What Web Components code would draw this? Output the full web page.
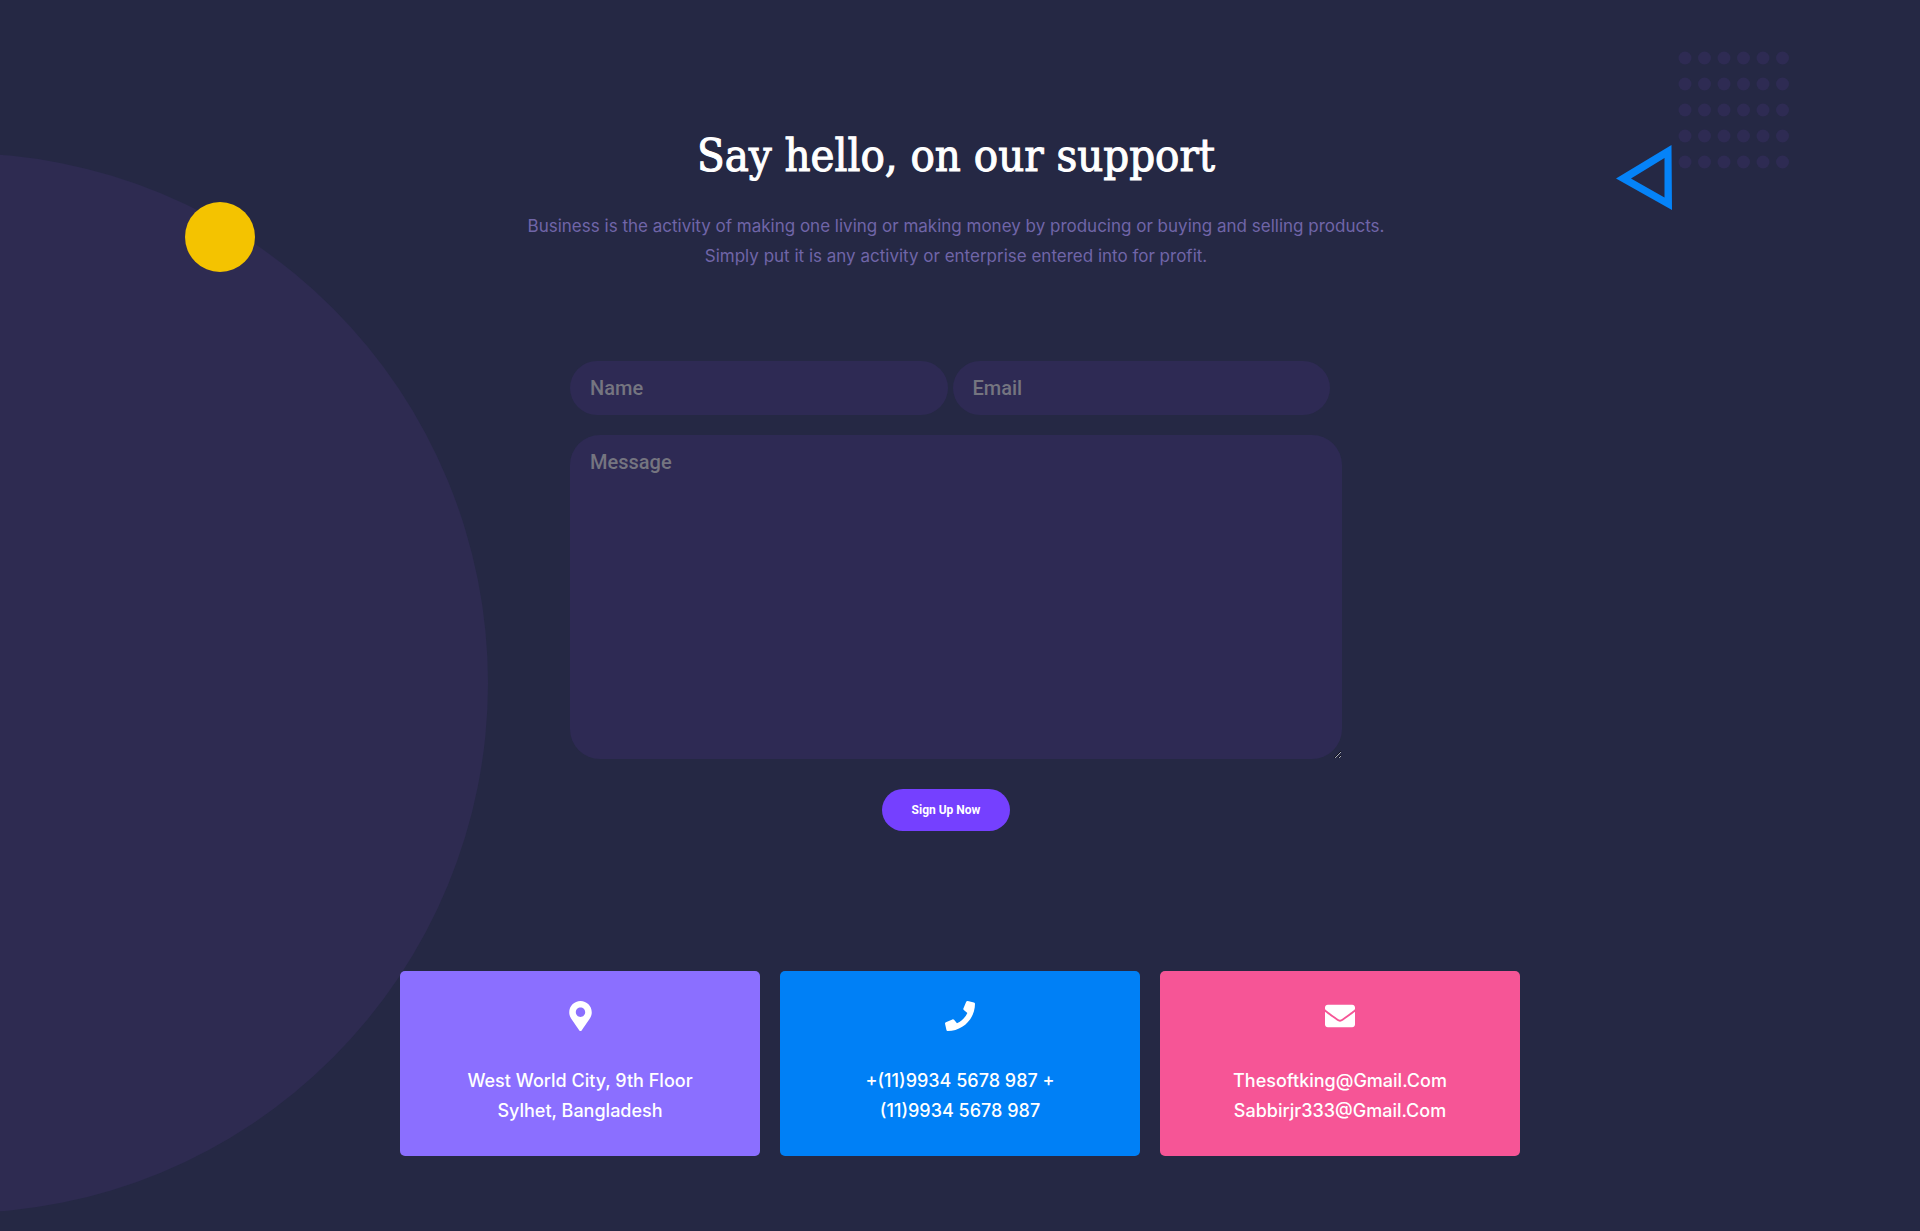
<!DOCTYPE html>
<html lang="en">
<head>
<meta charset="utf-8">
<meta name="viewport" content="width=device-width, initial-scale=1">
<title>Support</title>
<style>
  html, body { margin: 0; min-height: 100%; background: #252844; }
  body { font-family: Inter, "Open Sans", sans-serif; color: #fff; }
</style>
</head>
<body>
<support-page>
  <backdrop-shapes slot="backdrop"></backdrop-shapes>
  <section-heading>
    <span slot="title">Say hello, on our support</span>
    Business is the activity of making one living or making money by producing or buying and selling products.<br>
    Simply put it is any activity or enterprise entered into for profit.
  </section-heading>
  <contact-form></contact-form>
  <contact-card slot="card" icon="pin" style="--card: #8b6fff">West World City, 9th Floor<br>Sylhet, Bangladesh</contact-card>
  <contact-card slot="card" icon="phone" style="--card: #0080f6">+(11)9934 5678 987 +<br>(11)9934 5678 987</contact-card>
  <contact-card slot="card" icon="mail" style="--card: #f65596">Thesoftking@Gmail.Com<br>Sabbirjr333@Gmail.Com</contact-card>
</support-page>

<script>
class ShadowElement extends HTMLElement {
  constructor() {
    super();
    this.attachShadow({ mode: "open" });
  }
  connectedCallback() {
    this.shadowRoot.innerHTML = this.render();
  }
}

class SupportPage extends ShadowElement {
  render() {
    return `
      <style>
        :host { display: block; position: relative; overflow: hidden; min-height: 100vh; box-sizing: border-box; padding: 120px 0 75px; }
        main { position: relative; display: flex; flex-direction: column; gap: 140px; max-width: 1120px; margin: 0 auto; }
        .intro { display: flex; flex-direction: column; gap: 90px; padding-right: 8px; }
        .cards { display: grid; grid-template-columns: repeat(3, 1fr); gap: 20px; }
      </style>
      <slot name="backdrop"></slot>
      <main>
        <div class="intro"><slot></slot></div>
        <div class="cards"><slot name="card"></slot></div>
      </main>`;
  }
}

class BackdropShapes extends ShadowElement {
  render() {
    let dots = "";
    for (let row = 0; row < 5; row++)
      for (let col = 0; col < 6; col++)
        dots += `<circle cx="${7 + col * 19.5}" cy="${7 + row * 26}" r="6.5"/>`;
    return `
      <style>
        :host { position: absolute; inset: 0; pointer-events: none; }
        .disc, .sun, svg { position: absolute; }
        .disc { left: -572px; top: 153px; width: 1060px; height: 1060px; border-radius: 50%; background: #2e2b51; }
        .sun { left: 185px; top: 202px; width: 70px; height: 70px; border-radius: 50%; background: #f4c300; }
        .dots { right: 130px; top: 51px; fill: #2e2b53; }
        .triangle { right: 247px; top: 145px; fill: #0583f8; }
      </style>
      <div class="disc"></div>
      <div class="sun"></div>
      <svg class="dots" width="112" height="118" aria-hidden="true">${dots}</svg>
      <svg class="triangle" width="57" height="66" aria-hidden="true">
        <path fill-rule="evenodd" d="M0 33.5 55.5 0 56 65ZM15 33.5 48.5 52.500V13Z"/>
      </svg>`;
  }
}

class SectionHeading extends ShadowElement {
  render() {
    return `
      <style>
        :host { display: block; text-align: center; }
        h1 { margin: 0 0 19px; font: 400 45px/72px "DejaVu Serif Condensed", "DejaVu Serif", serif; color: #fff; -webkit-text-stroke: 1px #fff; }
        p { margin: 0; font-size: 17px; line-height: 30px; color: #7065a8; }
      </style>
      <h1><slot name="title"></slot></h1>
      <p><slot></slot></p>`;
  }
}

class ContactForm extends ShadowElement {
  render() {
    return `
      <style>
        :host { display: block; width: 100%; max-width: 772px; margin: 0 auto; }
        form { display: flex; flex-direction: column; }
        .row { display: flex; gap: 5px; padding-right: 12px; margin-bottom: 20px; }
        input, textarea { box-sizing: border-box; min-width: 0; border: 0; outline: 0; background: #2e2a54; color: #fff; font: 500 20px/24px Roboto, sans-serif; border-radius: 30px; }
        input { flex: 1; height: 54px; padding: 0 20px; }
        textarea { display: block; width: 100%; height: 324px; padding: 15px 20px; resize: both; }
        ::placeholder { color: #757580; opacity: 1; }
        button { align-self: center; margin: 30px 20px 0 0; padding: 0 30px; height: 42px; border: 0; border-radius: 21px; background: #7540ff; color: #fff; font: 700 12px/18px Roboto, sans-serif; cursor: pointer; }
      </style>
      <form>
        <div class="row">
          <input type="text" name="name" placeholder="Name" aria-label="Name">
          <input type="email" name="email" placeholder="Email" aria-label="Email">
        </div>
        <textarea name="message" placeholder="Message" aria-label="Message"></textarea>
        <button type="button">Sign Up Now</button>
      </form>`;
  }
}

const ICONS = {
  pin: { box: "0 0 384 512", w: 23, d: "M172.268 501.670C26.970 291.031 0 269.413 0 192 0 85.961 85.961 0 192 0s192 85.961 192 192c0 77.413-26.970 99.031-172.268 309.670-9.535 13.774-29.930 13.773-39.464 0zM192 272c44.183 0 80-35.817 80-80s-35.817-80-80-80-80 35.817-80 80 35.817 80 80 80z" },
  phone: { box: "0 0 512 512", w: 30, d: "M493.400 24.600l-104-24c-11.300-2.600-22.900 3.300-27.500 13.900l-48 112c-4.200 9.800-1.400 21.300 6.900 28l60.600 49.600c-36 76.700-98.900 140.500-177.200 177.200l-49.600-60.600c-6.800-8.300-18.200-11.100-28-6.900l-112 48C3.900 366.500-2 378.100.6 389.400l24 104C27.100 504.200 36.700 512 48 512c256.100 0 464-207.500 464-464 0-11.200-7.700-20.900-18.600-23.400z" },
  mail: { box: "0 0 512 512", w: 30, d: "M502.300 190.800c3.900-3.100 9.700-.2 9.700 4.700V400c0 26.500-21.500 48-48 48H48c-26.500 0-48-21.500-48-48V195.600c0-5 5.700-7.800 9.700-4.700 22.400 17.400 52.100 39.500 154.100 113.600 21.100 15.400 56.700 47.800 92.200 47.600 35.700.3 72-32.800 92.300-47.600 102-74.100 131.600-96.300 154-113.700zM256 320c23.200.4 56.600-29.200 73.400-41.400 132.700-96.300 142.800-104.700 173.400-128.700 5.800-4.500 9.200-11.500 9.200-18.900v-19c0-26.500-21.500-48-48-48H48c-26.500 0-48 21.500-48 48v19c0 7.400 3.400 14.300 9.200 18.900 30.600 23.900 40.700 32.400 173.400 128.700 16.800 12.200 50.200 41.800 73.400 41.400z" }
};

class ContactCard extends ShadowElement {
  render() {
    const icon = ICONS[this.getAttribute("icon")];
    return `
      <style>
        :host { display: flex; flex-direction: column; align-items: center; gap: 35px; padding: 30px 20px; border-radius: 5px; background: var(--card); }
        svg { height: 30px; fill: #fff; }
        p { margin: 0; font-size: 18px; font-weight: 500; line-height: 30px; text-align: center; color: #fff; }
      </style>
      <svg width="${icon.w}" viewBox="${icon.box}" aria-hidden="true"><path d="${icon.d}"/></svg>
      <p><slot></slot></p>`;
  }
}

customElements.define("support-page", SupportPage);
customElements.define("backdrop-shapes", BackdropShapes);
customElements.define("section-heading", SectionHeading);
customElements.define("contact-form", ContactForm);
customElements.define("contact-card", ContactCard);
</script>
</body>
</html>
